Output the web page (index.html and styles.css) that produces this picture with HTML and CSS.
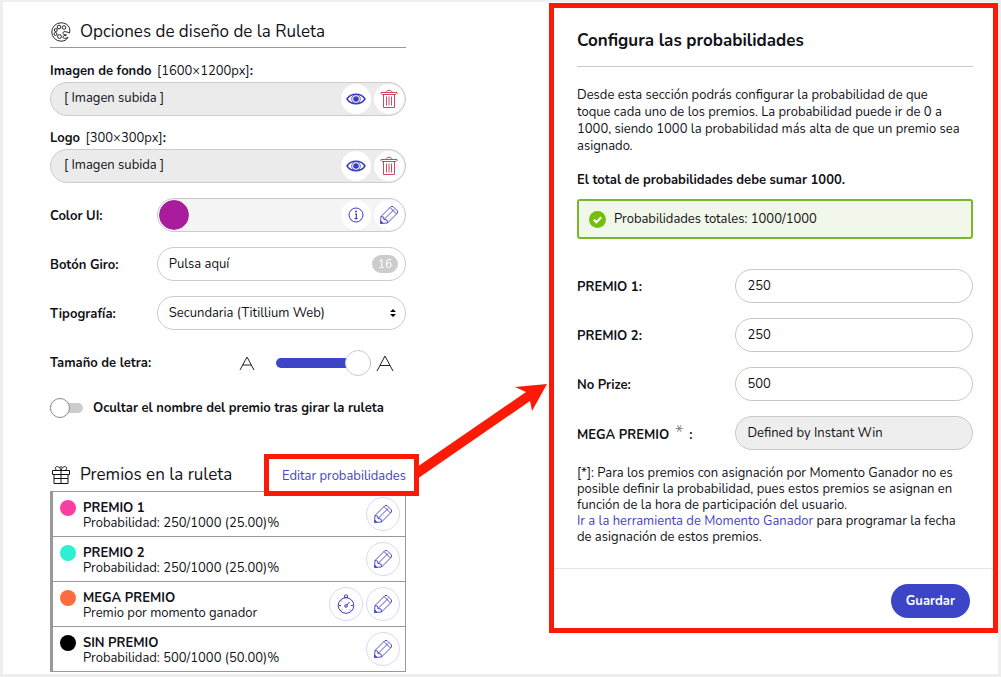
FILE: index.html
```html
<!DOCTYPE html>
<html lang="es">
<head>
  <meta charset="UTF-8">
  <title>Opciones de la Ruleta</title>
  <meta name="viewport" content="width=device-width, initial-scale=1.0">
  <link rel="stylesheet" href="styles.css">
</head>
<body>
  <svg class="sprite" aria-hidden="true">
    <symbol id="i-eye" viewBox="0 0 20 14">
      <path d="M1 7C5 .8 15 .8 19 7C15 13.200 5 13.200 1 7Z" fill="none" stroke="currentColor" stroke-width="1.500"/>
      <circle cx="10" cy="7" r="4.300" fill="none" stroke="currentColor" stroke-width=".8"/>
      <circle cx="10" cy="7" r="2.800" fill="currentColor"/>
    </symbol>
    <symbol id="i-trash" viewBox="0 0 18 20">
      <g fill="none" stroke="currentColor" stroke-width=".9">
        <path d="M1 5V3.500H17V5M2 5.500H16M6 3.500C6 .5 12 .5 12 3.500M3.500 5.500V18.500H14.500V5.500M6.500 7.500V16.500M9 7.500V16.500M11.500 7.500V16.500"/>
      </g>
    </symbol>
    <symbol id="i-info" viewBox="0 0 16 16">
      <circle cx="8" cy="8" r="7" fill="none" stroke="currentColor"/>
      <circle cx="8" cy="4.500" r="1" fill="currentColor"/>
      <path d="M7 7H8.300V11.500M6.500 11.700H9.700" fill="none" stroke="currentColor" stroke-width="1.2"/>
    </symbol>
    <symbol id="i-pencil" viewBox="0 0 20 20">
      <g fill="none" stroke="currentColor" stroke-linejoin="round" stroke-width=".9">
        <path d="M1.500 18.500L2 11.500L12 1.500H14L18.500 6V8L8.500 18Z"/>
        <path d="M2 11.500L4.500 12L5 14.500L8 15L8.500 18M5 14.500L15 4.500M11 2.500L17.500 9M1.700 16L4 18.300"/>
      </g>
      <path d="M1.500 18.500V16L4 18.300Z" fill="currentColor"/>
    </symbol>
    <symbol id="i-timer" viewBox="0 0 18 20">
      <g fill="none" stroke="currentColor">
        <circle cx="9" cy="11.500" r="7.800"/>
        <circle cx="9" cy="12" r="1.300"/>
        <path d="M10 11L12.500 8M7.500 3.500V1.500L9 .7L10.500 1.500V3.500ZM2 11.500H4M14 11.500H16M4 16.500L5 15.500M14 16.500L13 15.500M4 6.500L5 7.500"/>
      </g>
    </symbol>
  </svg>

  <main class="board">
    <section class="options">
      <h2 class="section-title">
        <svg class="title-icon" viewBox="0 0 20 20" aria-hidden="true">
          <g fill="none" stroke="currentColor" stroke-width=".9">
            <path d="M18.500 11C20 5 16 .8 10 .8A9.200 9.200 0 0 0 10 19.200C13 19.200 15.500 18 17 15.500L13.500 16.500C11.500 16.500 11.500 14 13 13.800L15.500 13C13 13 11.500 12 12 10.500C13 9 15 9.500 18.500 11Z"/>
            <circle cx="8" cy="5" r="1.800"/>
            <circle cx="13" cy="5.500" r="1.800"/>
            <circle cx="4.800" cy="8" r="1.500"/>
            <circle cx="4.500" cy="12" r="1.500"/>
            <circle cx="8.500" cy="14.500" r="1.900"/>
          </g>
        </svg>
        Opciones de diseño de la Ruleta
      </h2>

      <div class="upload">
        <label for="background">Imagen de fondo <span class="hint">[1600×1200px]</span>:</label>
        <div class="field field-filled">
          <input type="text" id="background" value="[ Imagen subida ]" readonly>
          <button class="round" type="button" aria-label="Ver"><svg class="eye"><use href="#i-eye"/></svg></button>
          <button class="round danger" type="button" aria-label="Borrar"><svg class="trash"><use href="#i-trash"/></svg></button>
        </div>
      </div>
      <div class="upload">
        <label for="logo">Logo <span class="hint">[300×300px]</span>:</label>
        <div class="field field-filled">
          <input type="text" id="logo" value="[ Imagen subida ]" readonly>
          <button class="round" type="button" aria-label="Ver"><svg class="eye"><use href="#i-eye"/></svg></button>
          <button class="round danger" type="button" aria-label="Borrar"><svg class="trash"><use href="#i-trash"/></svg></button>
        </div>
      </div>

      <div class="row">
        <label for="color">Color UI:</label>
        <div class="field field-color">
          <input type="color" id="color" value="#a91d9c">
          <button class="round" type="button" aria-label="Información"><svg class="info"><use href="#i-info"/></svg></button>
          <button class="round" type="button" aria-label="Editar"><svg class="pencil"><use href="#i-pencil"/></svg></button>
        </div>
      </div>
      <div class="row">
        <label for="spin">Botón Giro:</label>
        <div class="field">
          <input type="text" id="spin" value="Pulsa aquí">
          <span class="counter">16</span>
        </div>
      </div>
      <div class="row">
        <label for="font">Tipografía:</label>
        <div class="field">
          <select id="font">
            <option>Secundaria (Titillium Web)</option>
          </select>
          <svg class="arrows" viewBox="0 0 6 8" aria-hidden="true"><path d="M0 3L3 0L6 3ZM0 5H6L3 8Z"/></svg>
        </div>
      </div>
      <div class="row">
        <label for="size">Tamaño de letra:</label>
        <div class="slider">
          <svg class="letter-small" viewBox="0 0 16 14" aria-hidden="true"><path d="M1 14L8 1L15 14M3.500 9H12.500"/></svg>
          <input type="range" id="size" min="0" max="100" value="100">
          <svg class="letter-large" viewBox="0 0 18 16" aria-hidden="true"><path d="M1 16L9 1L17 16M4 10.500H14"/></svg>
        </div>
      </div>
      <div class="switch-row">
        <input type="checkbox" class="switch" id="hide-name">
        <label for="hide-name">Ocultar el nombre del premio tras girar la ruleta</label>
      </div>

      <div class="prizes-head">
        <h2 class="section-title">
          <svg class="title-icon" viewBox="0 0 20 20" aria-hidden="true">
            <g fill="none" stroke="currentColor">
              <path d="M1.500 5.500H18.500V9.500H1.500ZM3 9.500V18.500H17V9.500M10 5.500V18.500M3 13.500H17"/>
              <path d="M10 5C8 1 5.500 1 4.500 2.500C4 4 5 5 6 5.500M10 5C12 1 14.500 1 15.500 2.500C16 4 15 5 14 5.500M8.500 2.500Q10 1 11.500 2.500"/>
            </g>
          </svg>
          Premios en la ruleta
        </h2>
        <div class="marked">
          <a href="#probabilidades">Editar probabilidades</a>
          <svg class="pointer" viewBox="0 0 132 96" aria-hidden="true"><path d="M0 83L109 8L98 3L130 0L115 27L113 17L0 95Z"/></svg>
        </div>
      </div>
      <ul class="prizes">
        <li>
          <span class="dot pink"></span>
          <p><strong>PREMIO 1</strong>Probabilidad: 250/1000 (25.00)%</p>
          <button class="round outlined" type="button" aria-label="Editar"><svg class="pencil"><use href="#i-pencil"/></svg></button>
        </li>
        <li>
          <span class="dot teal"></span>
          <p><strong>PREMIO 2</strong>Probabilidad: 250/1000 (25.00)%</p>
          <button class="round outlined" type="button" aria-label="Editar"><svg class="pencil"><use href="#i-pencil"/></svg></button>
        </li>
        <li>
          <span class="dot orange"></span>
          <p><strong>MEGA PREMIO</strong>Premio por momento ganador</p>
          <button class="round outlined" type="button" aria-label="Momento ganador"><svg class="timer"><use href="#i-timer"/></svg></button>
          <button class="round outlined" type="button" aria-label="Editar"><svg class="pencil"><use href="#i-pencil"/></svg></button>
        </li>
        <li>
          <span class="dot black"></span>
          <p><strong>SIN PREMIO</strong>Probabilidad: 500/1000 (50.00)%</p>
          <button class="round outlined" type="button" aria-label="Editar"><svg class="pencil"><use href="#i-pencil"/></svg></button>
        </li>
      </ul>
    </section>

    <form class="panel" id="probabilidades">
      <div class="panel-body">
        <h2 class="panel-title">Configura las probabilidades</h2>
        <p class="intro">Desde esta sección podrás configurar la probabilidad de que<br>
          toque cada uno de los premios. La probabilidad puede ir de 0 a<br>
          1000, siendo 1000 la probabilidad más alta de que un premio sea<br>
          asignado.</p>
        <p class="rule">El total de probabilidades debe sumar 1000.</p>
        <div class="total">
          <svg viewBox="0 0 16 16" aria-hidden="true"><circle cx="8" cy="8" r="8" fill="#73bf0b"/><path d="M4.500 8.200L7 10.600L11.500 5.800" fill="none" stroke="#fff" stroke-width="2"/></svg>
          Probabilidades totales: 1000/1000
        </div>
        <div class="row">
          <label for="prize1">PREMIO 1:</label>
          <div class="field"><input type="text" id="prize1" value="250"></div>
        </div>
        <div class="row">
          <label for="prize2">PREMIO 2:</label>
          <div class="field"><input type="text" id="prize2" value="250"></div>
        </div>
        <div class="row">
          <label for="noprize">No Prize:</label>
          <div class="field"><input type="text" id="noprize" value="500"></div>
        </div>
        <div class="row">
          <label for="mega">MEGA PREMIO <span class="star">*</span> :</label>
          <div class="field field-disabled"><input type="text" id="mega" value="Defined by Instant Win" readonly></div>
        </div>
        <p class="note">[*]: Para los premios con asignación por Momento Ganador no es posible definir la probabilidad, pues estos premios se asignan en función de la hora de participación del usuario.<br>
          <a href="#momento">Ir a la herramienta de Momento Ganador</a> para programar la fecha de asignación de estos premios.</p>
      </div>
      <div class="panel-foot">
        <button class="save" type="button">Guardar</button>
      </div>
    </form>
  </main>
</body>
</html>
```
FILE: styles.css
```css
* {
  box-sizing: border-box;
}
body {
  margin: 0;
  background: #eee;
  color: #111218;
  font-family: Nunito, 'Open Sans', 'Noto Sans', sans-serif;
  font-size: 13px;
  line-height: 16px;
}
h2, p, ul {
  margin: 0;
  padding: 0;
}
a {
  color: #4545bd;
  text-decoration: none;
}
label {
  font-weight: 700;
}
button, input, select {
  font: inherit;
  color: inherit;
}
button {
  cursor: pointer;
}
svg {
  display: block;
  flex: none;
}
.sprite {
  display: none;
}
.board {
  display: grid;
  grid-template-columns: minmax(0, 356fr) minmax(0, 449fr);
  column-gap: 143px;
  align-items: start;
  margin: 2px 3px 0;
  padding: 0 0 2px 47px;
  background: #fff;
}

/* left column */
.options {
  padding-top: 13px;
}
.section-title {
  display: flex;
  align-items: center;
  gap: 9px;
  height: 33px;
  font-size: 17px;
  font-weight: 400;
  white-space: nowrap;
}
.title-icon {
  width: 20px;
  height: 20px;
  margin-left: 1px;
}
.options > .section-title {
  padding-top: 2px;
  border-bottom: 1px solid #999;
  margin-bottom: 14px;
}
.upload {
  margin-bottom: 13px;
}
.upload + .row {
  margin-top: 15px;
}
.upload label {
  display: block;
  height: 20px;
  line-height: 18px;
}
.hint {
  margin-left: 2px;
  font-weight: 400;
}
.field {
  display: flex;
  align-items: center;
  height: 34px;
  padding: 0 1px;
  border: 1px solid #ccc;
  border-radius: 17px;
  background: #fff;
}
.field input[type="text"], .field select {
  flex: 1;
  min-width: 0;
  height: 30px;
  padding: 0 10px;
  border: 0;
  background: none;
  outline: none;
  appearance: none;
}
.field-filled {
  background: #ebebeb;
}
.field.field-filled input {
  padding: 0 12px 2px;
}
.field-color {
  background: #f4f4f4;
}
.field-color input {
  width: 30px;
  height: 30px;
  margin-right: auto;
  padding: 0;
  border: 0;
  border-radius: 50%;
  background: none;
  appearance: none;
}
.field-color input::-webkit-color-swatch-wrapper {
  padding: 0;
}
.field-color input::-webkit-color-swatch {
  border: 0;
  border-radius: 50%;
}
.round {
  display: flex;
  align-items: center;
  justify-content: center;
  flex: none;
  width: 30px;
  height: 30px;
  margin-left: 3px;
  padding: 0;
  border: 0;
  border-radius: 50%;
  background: #fff;
  color: #3c3cc0;
}
.danger {
  color: #cb3350;
}
.outlined {
  width: 34px;
  height: 34px;
  border: 1px solid #dcd8f5;
}
.eye {
  width: 20px;
  height: 14px;
}
.trash, .timer {
  width: 18px;
  height: 20px;
}
.info {
  width: 16px;
  height: 16px;
}
.pencil {
  width: 20px;
  height: 20px;
}
.row {
  display: grid;
  grid-template-columns: 3fr 7fr;
  align-items: center;
  margin-bottom: 15px;
}
.row label {
  padding-top: 2px;
}
.counter {
  width: 26px;
  margin-right: 6px;
  border-radius: 9px;
  background: #ccc;
  color: #fff;
  font-size: 12px;
  line-height: 18px;
  text-align: center;
}
.arrows {
  width: 6px;
  height: 8px;
  margin-right: 8px;
}
.slider {
  display: flex;
  align-items: center;
  justify-content: flex-end;
  height: 34px;
  padding: 2px 12px 0 0;
}
.slider path {
  fill: none;
  stroke: #222;
}
.letter-small {
  width: 16px;
  height: 14px;
  margin-right: 21px;
}
.letter-large {
  width: 18px;
  height: 16px;
  margin-left: 5px;
}
.slider input {
  width: 95px;
  height: 26px;
  margin: 0;
  appearance: none;
  background: none;
}
.slider input::-webkit-slider-runnable-track {
  height: 10px;
  border-radius: 5px;
  background: #3c45c8;
}
.slider input::-webkit-slider-thumb {
  width: 26px;
  height: 26px;
  margin-top: -8px;
  border: 1px solid #ccc;
  border-radius: 50%;
  background: #fff;
  appearance: none;
}
.switch-row {
  display: flex;
  align-items: center;
  gap: 10px;
  height: 28px;
  white-space: nowrap;
}
.switch {
  display: flex;
  align-items: center;
  width: 33px;
  height: 10px;
  margin: 0;
  border-radius: 5px;
  background: #ccc;
  appearance: none;
}
.switch::before {
  content: "";
  width: 18px;
  height: 18px;
  border: 1px solid #888;
  border-radius: 50%;
  background: #fff;
}
.prizes-head {
  display: flex;
  align-items: center;
  justify-content: space-between;
  margin-top: 36px;
}
.marked {
  position: relative;
  padding-top: 2px;
  white-space: nowrap;
}
.marked::after {
  content: "";
  position: absolute;
  inset: -12px -13px -12px -18px;
  border: 5px solid #fb1a05;
  pointer-events: none;
}
.pointer {
  position: absolute;
  left: calc(100% + 11px);
  bottom: 4px;
  width: 132px;
  height: 96px;
  fill: #fb1a05;
}
.prizes {
  border: 1px solid #999;
  border-left-width: 3px;
  list-style: none;
}
.prizes li {
  display: flex;
  align-items: center;
  height: 45px;
  padding-right: 5px;
  border-bottom: 1px solid #999;
}
.prizes li:last-child {
  height: 44px;
  border-bottom: 0;
}
.prizes p {
  flex: 1;
  padding-top: 4px;
  line-height: 15px;
}
.prizes strong {
  display: block;
  font-weight: 700;
}
.dot {
  width: 16px;
  height: 16px;
  margin: 0 7px 12px;
  border-radius: 50%;
}
.pink {
  background: #fb3fa2;
}
.teal {
  background: #2eefd2;
}
.orange {
  background: #ff6c40;
}
.black {
  background: #000;
}

/* probabilities panel */
.panel {
  margin-top: 1px;
  border: 5px solid #fb1a05;
}
.panel-body {
  padding: 20px 20px 23px 23px;
}
.panel-title {
  padding-bottom: 12px;
  border-bottom: 1px solid #ccc;
  font-size: 17px;
  font-weight: 700;
  line-height: 26px;
}
.intro {
  margin-top: 20px;
  line-height: 17px;
}
.rule {
  margin: 17px 0 11px;
  font-weight: 700;
}
.total {
  display: flex;
  align-items: center;
  gap: 8px;
  height: 40px;
  margin-bottom: 30px;
  padding: 0 10px;
  border: 2px solid #76b82a;
  border-radius: 3px;
  background: #f1f7e9;
}
.total svg {
  width: 17px;
  height: 17px;
}
.panel .row {
  grid-template-columns: 2fr 3fr;
}
.panel .field {
  border-color: #c8c8c8;
}
.panel .field-disabled {
  background: #eee;
}
.star {
  margin: 0 2px;
  color: #888;
  font-size: 20px;
  font-weight: 300;
}
.panel-foot {
  display: flex;
  justify-content: flex-end;
  padding: 15px 23px 10px;
  border-top: 1px solid #e4e4e4;
}
.save {
  height: 34px;
  padding: 0 15px;
  border: 0;
  border-radius: 17px;
  background: #3c45c8;
  color: #fff;
  font-weight: 700;
}
```
